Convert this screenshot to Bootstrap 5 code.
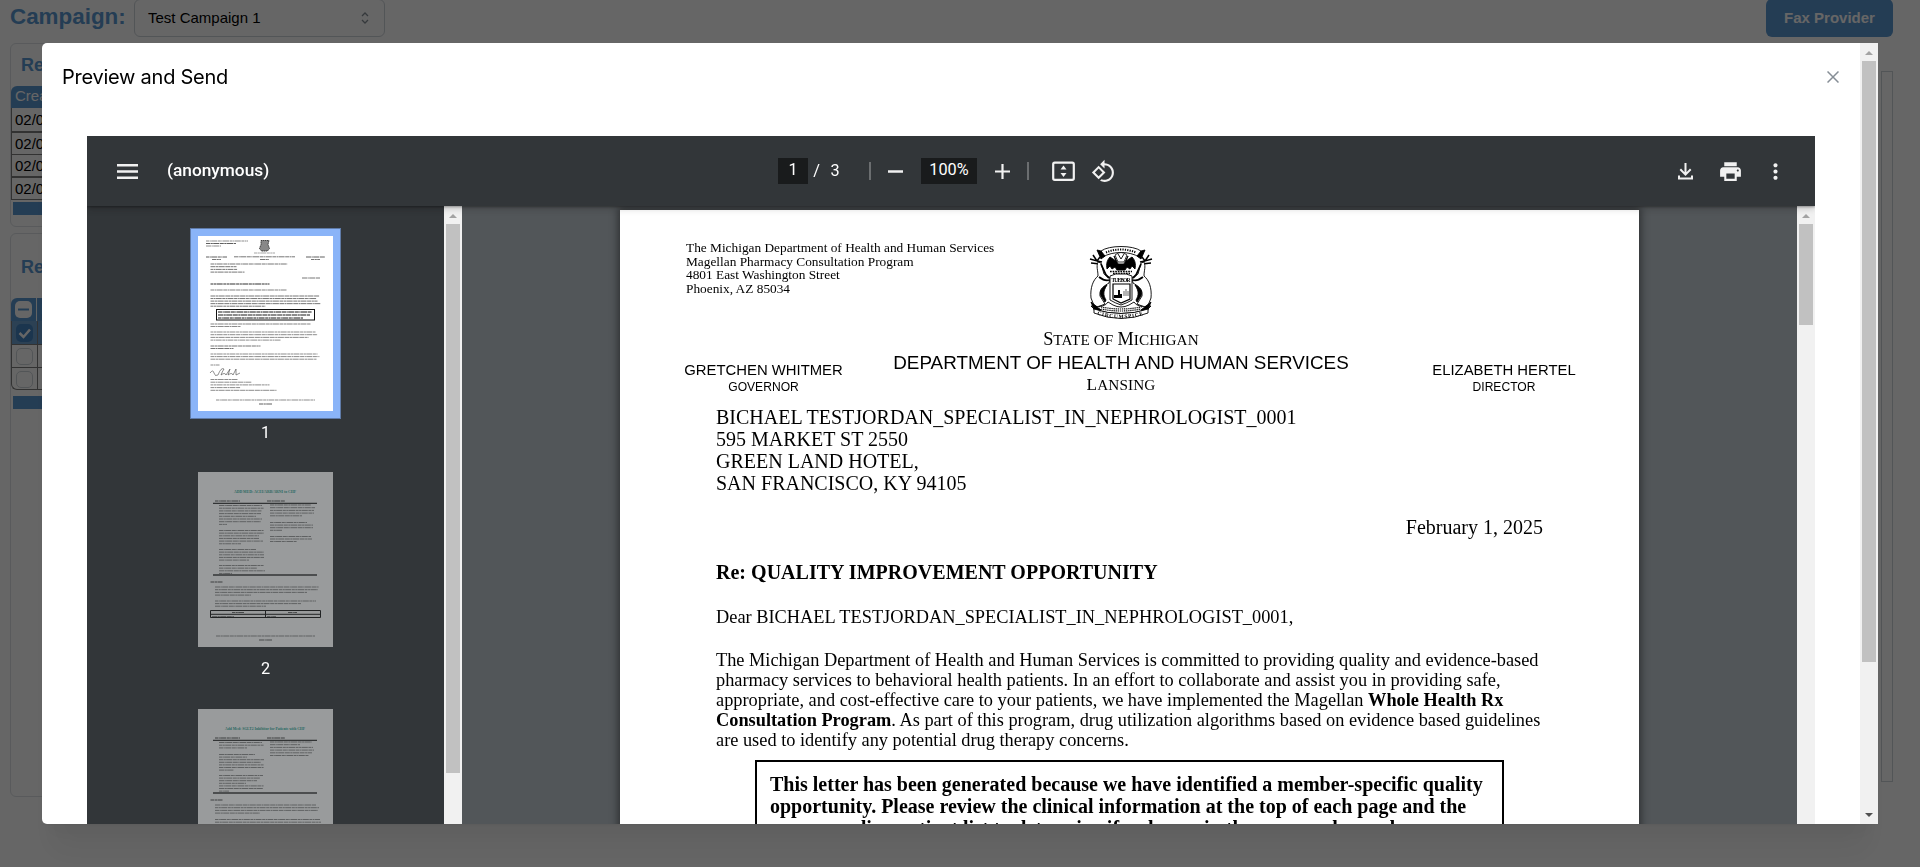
<!DOCTYPE html>
<html lang="en">
<head>
<meta charset="utf-8">
<title>Preview and Send</title>
<meta name="viewport" content="width=device-width, initial-scale=1">
<link href="https://cdn.jsdelivr.net/npm/bootstrap@5.3.0/dist/css/bootstrap.min.css" rel="stylesheet">
<style>
  body { height: 867px; overflow: hidden; background: #fff; font-family: "Liberation Sans", Arial, sans-serif; font-size: 15px; color: #000; }
  /* page under the overlay */
  .topbar { height: 37px; padding: 0 27px 0 10px; }
  .topbar-label { font-size: 22.4px; line-height: 34px; color: #5b98d2; width: 124px; }
  .campaign-select { width: 251px; height: 38px; margin-top: -1px; border: 1px solid #ced4da; border-radius: 6px; padding: 0 15px 0 13px; }
  .fax-btn { width: 127px; height: 38px; margin-top: -1px; border-radius: 6px; background: #5b98d2; color: #fff; font-size: 15px; padding: 0; border: 0; }
  .panel { border: 1px solid #dee2e6; border-radius: 6px; width: 900px; overflow: hidden; }
  .panel-title { font-size: 18px; line-height: 20px; padding-left: 10px; color: #5b98d2; }
  .grid-head { background: #5b98d2; color: #fff; border-radius: 6px 0 0 0; }
  .grid-row { border: solid #7d7d7d; border-width: 0 0 1px 1px; padding-left: 3px; }
  .grid-foot { height: 13px; margin-left: 2px; background: #5b98d2; }
  .tick { width: 17px; height: 17px; margin-left: 0; border: 1px solid #ced4da; border-radius: 5px; background: #fff; }
  .tick-cell { width: 26px; border-right: 1px solid #7d7d7d; padding: 3px 0 0 4px; }
  .side-panel { width: 12px; height: 711px; margin: 34px 27px 0 0; border: 1px solid #ced4da; }
  .veil { background: rgba(0,0,0,.6); }
  /* dialog */
  .dialog { left: 42px; top: 43px; width: 1836px; height: 781px; border-radius: 5px 0 0 5px; background: #fff; overflow: hidden; }
  .dialog-wrap { left: 42px; top: 43px; width: 1836px; height: 781px; box-shadow: 0 1px 3px rgba(0,0,0,.05), 0 36px 28px -7px rgba(0,0,0,.05), 0 17px 17px -7px rgba(0,0,0,.04); }
  .dialog-head { height: 93px; padding: 20px 20px 0 20px; }
  .dialog-title { font-family: Inter, sans-serif; font-size: 20px; line-height: 28px; letter-spacing: -.25px; }
  .sb { width: 18px; background: #f1f1f1; flex: none; }
  .sb-thumb { width: 14px; background: #c1c1c1; flex: none; }
  .viewer { margin: 0 45px; height: 688px; background: #525659; font-family: Roboto, sans-serif; }
  .pdf-bar { height: 70px; flex: none; background: #323639; color: #fff; z-index: 3; clip-path: inset(0 0 -10px 0); box-shadow: 0 1px 2px rgba(0,0,0,.3), 0 2px 6px rgba(0,0,0,.15), 0 4px 8px rgba(0,0,0,.06); }
  .pdf-bar svg { flex: none; fill: #f1f1f1; margin-top: 1px; }
  .pdf-name { font-size: 17.3px; font-weight: 500; width: 611px; margin-left: 27px; line-height: 20px; padding-bottom: 3px; }
  .field { background: #191b1c; height: 26px; line-height: 23px; font-size: 16.25px; text-align: center; }
  .vr-line { width: 2px; height: 18px; background: #6b6e70; }
  .rail { width: 357px; background: #323639; padding-left: 103px; }
  .thumb { width: 151px; border: 8px solid transparent; }
  .thumb-on { border-color: #8ab4f8; outline: 1px solid #5f7ba8; outline-offset: -1px; }
  .thumb-page { width: 135px; height: 175px; background: #fff; display: block; }
  .thumb-off { opacity: .5; }
  .thumb-no { color: #fff; font-size: 16.25px; line-height: 20px; width: 151px; text-align: center; }
  /* letter */
  .sheet { width: 1019px; height: 1320px; margin: 4px 0 0 158px; background: #fff; box-shadow: 0 0 8px 2px rgba(0,0,0,.45); color: #000; font-family: "Liberation Serif", "Times New Roman", serif; font-size: 20px; line-height: 22px; flex: none; white-space: nowrap; }
  .letterhead { display: grid; grid-template-columns: 159px 556px 177px; padding: 31px 0 0 64px; height: 196px; align-content: start; }
  .from { grid-column: 1 / 3; grid-row: 1; font-size: 13.33px; line-height: 13.33px; padding-left: 2px; }
  .seal { grid-column: 2; grid-row: 1; justify-self: center; margin-top: 3px; }
  .official { font-family: "Liberation Sans", Arial, sans-serif; font-size: 14.87px; line-height: 17px; text-align: center; padding-top: 42px; }
  .official div + div { font-size: 12.1px; }
  .caps { font-size: 18.3px; line-height: 20px; }
  .caps span { font-size: 15.2px; letter-spacing: .15px; }
  .dept { font-family: "Liberation Sans", Arial, sans-serif; font-size: 18.83px; line-height: 24px; padding-top: 1px; }
  .letter { padding: 0 96px; }
  .p-text { font-size: 18.33px; line-height: 20px; }
  .notice { border: 2px solid #000; width: 749px; margin: 10px 0 0 39px; padding: 11px 0 0 13px; }
</style>
</head>
<body>
<header class="topbar d-flex">
  <div class="topbar-label fw-bold">Campaign:</div>
  <div class="campaign-select d-flex align-items-center justify-content-between">
    <span>Test Campaign 1</span>
    <svg width="8" height="12" viewBox="0 0 8 12" fill="none" stroke="#868e96" stroke-width="1.3"><path d="M1 4 4 1l3 3M1 8l3 3 3-3"/></svg>
  </div>
  <button class="fax-btn fw-bold ms-auto">Fax Provider</button>
</header>
<main class="d-flex justify-content-between">
  <div style="padding:6px 0 0 10px">
    <section class="panel" style="height:184px">
      <div class="panel-title fw-bold" style="padding-top:11px;height:42px">Re</div>
      <div class="grid-head" style="height:22px;line-height:20px;padding-left:4px">Crea</div>
      <div class="grid-row" style="height:25px;line-height:24px;border-bottom-width:2px">02/0</div>
      <div class="grid-row" style="height:22px;line-height:22px">02/0</div>
      <div class="grid-row" style="height:23px;line-height:22px;border-bottom-width:2px">02/0</div>
      <div class="grid-row" style="height:22px;line-height:22px;margin-bottom:2px">02/0</div>
      <div class="grid-foot"></div>
    </section>
    <section class="panel" style="height:564px;margin-top:6px">
      <div class="panel-title fw-bold" style="padding-top:23px;height:64px">Re</div>
      <div class="grid-head d-flex" style="height:23px">
        <div class="tick-cell border-light"><svg class="d-block" width="17" height="17"><rect width="17" height="17" rx="5" fill="#fff"/><path d="M3 8.500h11" stroke="#5b98d2" stroke-width="2"/></svg></div>
        <span class="ps-1">P</span>
      </div>
      <div class="d-flex grid-row p-0" style="height:24px;background:#6fa3d3">
        <div class="tick-cell"><svg class="d-block" width="17" height="18"><rect width="17" height="18" rx="5" fill="#4585c2"/><path d="m3.500 9 4 4 6.500-7.500" fill="none" stroke="#fff" stroke-width="2.500"/></svg></div>
      </div>
      <div class="d-flex grid-row p-0" style="height:23px"><div class="tick-cell"><div class="tick"></div></div></div>
      <div class="d-flex grid-row p-0" style="height:22px;margin-bottom:6px;border-bottom-left-radius:6px"><div class="tick-cell"><div class="tick"></div></div></div>
      <div class="grid-foot"></div>
    </section>
  </div>
  <aside class="side-panel"></aside>
</main>

<div class="veil position-fixed top-0 start-0 w-100 h-100"></div>
<div class="dialog-wrap position-fixed"></div>
<div class="dialog position-fixed d-flex" role="dialog" aria-label="Preview and Send">
  <div class="flex-grow-1">
    <div class="dialog-head d-flex justify-content-between align-items-start">
      <div class="dialog-title">Preview and Send</div>
      <svg style="margin:8px 1px 0 0" width="12" height="12" viewBox="0 0 12 12" stroke="#868e96" stroke-width="1.5"><path d="M.5.5l11 11M11.500.5l-11 11"/></svg>
    </div>
    <div class="viewer d-flex flex-column">
      <div class="pdf-bar d-flex align-items-center position-relative">
        <svg style="margin-left:28px" width="25" height="25"><path d="M2 5h21v2.500H2zM2 11.200h21v2.500H2zM2 17.500h21V20H2z"/></svg>
        <div class="pdf-name">(anonymous)</div>
        <div class="field" style="width:30px">1</div>
        <div class="text-center" style="width:17px;font-size:16.25px">/</div>
        <div class="text-center" style="width:20px;font-size:16.25px">3</div>
        <div class="vr-line" style="margin-left:24px"></div>
        <svg style="margin-left:12px" width="25" height="25"><path d="M5 11.200h15v2.600H5z"/></svg>
        <div class="field" style="width:56px;margin-left:13px">100%</div>
        <svg style="margin-left:13px" width="25" height="25"><path d="M5 11.400h6.400V5h2.200v6.400H20v2.200h-6.400V20h-2.200v-6.400H5z"/></svg>
        <div class="vr-line" style="margin-left:12px"></div>
        <svg style="margin-left:22px" width="25" height="25"><rect x="2.200" y="3.700" width="20.600" height="17.100" rx="1.500" fill="none" stroke="#f1f1f1" stroke-width="2.200"/><path d="M12.500 6.500 15.500 10.500h-6zM12.500 18 15.500 14h-6z"/></svg>
        <svg style="margin-left:15px" width="25" height="25" viewBox="0 0 24 24"><path d="M7.340 6.410.86 12.900l6.490 6.480 6.490-6.480-6.500-6.490zM3.690 12.900l3.660-3.660L11 12.900l-3.660 3.660-3.650-3.660zm15.670-6.260C17.610 4.880 15.300 4 13 4V.76L8.760 5 13 9.240V6c1.790 0 3.580.68 4.950 2.050 2.730 2.730 2.730 7.170 0 9.900C16.580 19.320 14.790 20 13 20c-.97 0-1.940-.21-2.840-.61l-1.490 1.490C10.020 21.620 11.510 22 13 22c2.300 0 4.610-.88 6.360-2.640 3.520-3.510 3.520-9.210 0-12.720z"/></svg>
        <svg class="ms-auto" width="25" height="25"><path d="M12.500 4v11.500M7.300 10.300l5.200 5.300 5.200-5.300M6 16.500v3h13v-3" fill="none" stroke="#f1f1f1" stroke-width="2"/></svg>
        <svg style="margin-left:20px" width="25" height="25" viewBox="0 0 24 24"><path d="M19 8H5c-1.660 0-3 1.340-3 3v6h4v4h12v-4h4v-6c0-1.660-1.340-3-3-3zm-3 11H8v-5h8v5zm3-7c-.55 0-1-.45-1-1s.45-1 1-1 1 .45 1 1-.45 1-1 1zm-1-9H6v4h12V3z"/></svg>
        <svg style="margin:1px 27px 0 20px" width="25" height="25" viewBox="0 0 24 24"><path d="M12 8c1.100 0 2-.9 2-2s-.9-2-2-2-2 .9-2 2 .9 2 2 2zm0 2c-1.100 0-2 .9-2 2s.9 2 2 2 2-.9 2-2-.9-2-2-2zm0 6c-1.100 0-2 .9-2 2s.9 2 2 2 2-.9 2-2-.9-2-2-2z"/></svg>
      </div>
      <div class="d-flex flex-grow-1 overflow-hidden">
        <div class="rail overflow-hidden flex-shrink-0">
          <div class="thumb thumb-on" style="margin-top:22px"><svg class="thumb-page" data-page="1"></svg></div>
          <div class="thumb-no" style="margin-top:4px;margin-bottom:21px">1</div>
          <div class="thumb thumb-off"><svg class="thumb-page" data-page="2"></svg></div>
          <div class="thumb-no" style="margin-top:4px;margin-bottom:22px">2</div>
          <div class="thumb thumb-off"><svg class="thumb-page" data-page="3"></svg></div>
        </div>
        <div class="sb d-flex flex-column align-items-center">
          <svg width="18" height="18" class="flex-shrink-0"><path d="M9 8l4 4H5z" fill="#a3a3a3"/></svg>
          <div class="sb-thumb" style="height:549px"></div>
        </div>
        <div class="flex-grow-1 overflow-hidden d-flex align-items-start">
          <article class="sheet">
            <div class="letterhead">
              <div class="from"><div style="margin-bottom:.7px">The Michigan Department of Health and Human Services</div><div>Magellan Pharmacy Consultation Program</div><div>4801 East Washington Street</div><div>Phoenix, AZ 85034</div></div>
              <svg class="seal" width="64" height="76" viewBox="0 0 64 76" fill="none" stroke="#000" stroke-width=".9">
                <path d="M12 7C20 1 44 1 52 7l-2 6c-9-6-27-6-36 0z"/><path d="M12 7 8 6l4 9 4-3zM52 7l4-1-4 9-4-3z" fill="#000"/>
                <path d="M17 8.500c9-4 21-4 30 0" stroke-width="2" stroke-dasharray="1.200 1.200"/>
                <path d="M25 12l2 5-6-4c-3 3-4 7-3 12l3-3 2 3 3-2 2 3h8l2-3 3 2 2-3 3 3c1-5 0-9-3-12l-6 4 2-5-4 8h-6z" fill="#000"/>
                <path d="M26 11q6-5 12 0l-3 7h-6z" fill="#fff" stroke-width=".8"/><path d="m29 10 3 5 3-5" stroke-width=".9"/>
                <path d="M21 27.500h22M24 29.500h17" stroke-width="1.500" stroke-dasharray="1.700 .9"/>
                <path d="M1 15l7 2 3-4M4 11l4 6 5 1M2 19l9 1M63 15l-7 2-3-4M60 11l-4 6-5 1M62 19l-9 1" stroke-width="1.500"/>
                <path d="M9 18c-2 5 0 8 0 14-5 4-8 12-7 22l4 10 10-4-5-8c-1-7 4-10 9-13l1-5-6-4-3-11z" fill="#fff"/>
                <path d="M55 18c2 5 0 8 0 14 5 4 8 12 7 22l-4 10-10-4 5-8c1-7-4-10-9-13l-1-5 6-4 3-11z" fill="#fff"/>
                <path d="M12 20l5 11 3 3M10 33c4 3 7 4 10 3M52 20l-5 11-3 3M54 33c-4 3-7 4-10 3" stroke-width="1.800"/>
                <path d="M18 41c-5 2-8 6-6 11l4 6 1-2c-3-5-3-9 1-15zM46 41c5 2 8 6 6 11l-4 6-1-2c3-5 3-9-1-15z" fill="#000"/>
                <path d="M21 32q6-3 11-2 5-1 11 2v24q-5 3-11 5-6-2-11-5z" fill="#fff"/>
                <path d="M24 40h17v15l-9 4-8-4z" stroke-width="1.200"/>
                <path d="M25 51h4v-5h2v4h2v4h-8z" fill="#000" stroke="none"/><path d="M35 52v-5M37 52v-7M39 52v-5" stroke-width=".6"/>
                <text x="32" y="38" text-anchor="middle" textLength="19" font-family="Liberation Serif" font-weight="700" font-size="5.500" fill="#000" stroke="none">TUEBOR</text>
                <path d="M2 62q14 2 17-4l5 3q8 4 16 0l5-3q3 6 17 4l-4 4q-26 7-52 0z" fill="#fff"/>
                <path d="M10 62.500q22 5 44 0M12 65q20 4 40 0" stroke-width="1.200" stroke-dasharray="1.300 .8"/>
                <path d="M2 58l4 10 6-2zM62 58l-4 10-6-2z" fill="#000"/>
                <path d="M5 65q27 9 54 0v4q-27 11-54 0z" fill="#fff"/>
                <path id="motto" d="M8 70.500q24 7.500 48 0" stroke="none"/>
                <text font-family="Liberation Serif" font-weight="700" font-size="5.500" fill="#000" stroke="none"><textPath href="#motto" textLength="47">CIRCUMSPICE</textPath></text>
              </svg>
              <div class="official" style="grid-column:1">
                <div>GRETCHEN WHITMER</div><div>GOVERNOR</div>
              </div>
              <div class="text-center" style="grid-column:2;padding-top:9px">
                <div class="caps">S<span>TATE OF </span>M<span>ICHIGAN</span></div>
                <div class="dept">DEPARTMENT OF HEALTH AND HUMAN SERVICES</div>
                <div class="caps" style="font-size:17.300px">L<span>ANSING</span></div>
              </div>
              <div class="official" style="grid-column:3;padding-left:33px">
                <div>ELIZABETH HERTEL</div><div>DIRECTOR</div>
              </div>
            </div>
            <div class="letter">
              <div>BICHAEL TESTJORDAN_SPECIALIST_IN_NEPHROLOGIST_0001</div>
              <div>595 MARKET ST 2550</div>
              <div>GREEN LAND HOTEL,</div>
              <div>SAN FRANCISCO, KY 94105</div>
              <div class="text-end" style="margin:22px 0">February 1, 2025</div>
              <div class="fw-bold" style="position:static;padding-top:1px;letter-spacing:.02px">Re: QUALITY IMPROVEMENT OPPORTUNITY</div>
              <div style="margin:23px 0 22px;font-size:18.350px">Dear BICHAEL TESTJORDAN_SPECIALIST_IN_NEPHROLOGIST_0001,</div>
              <div class="p-text">The Michigan Department of Health and Human Services is committed to providing quality and evidence-based<br>pharmacy services to behavioral health patients. In an effort to collaborate and assist you in providing safe,<br>appropriate, and cost-effective care to your patients, we have implemented the Magellan <b>Whole Health Rx</b><br><b>Consultation Program</b>. As part of this program, drug utilization algorithms based on evidence based guidelines<br>are used to identify any potential drug therapy concerns.</div>
              <div class="notice fw-bold">This letter has been generated because we have identified a member-specific quality<br>opportunity. Please review the clinical information at the top of each page and the<br>corresponding patient list to determine if a change in therapy can be made.</div>
            </div>
          </article>
        </div>
        <div class="sb d-flex flex-column align-items-center">
          <svg width="18" height="18" class="flex-shrink-0"><path d="M9 8l4 4H5z" fill="#a3a3a3"/></svg>
          <div class="sb-thumb" style="height:101px"></div>
        </div>
      </div>
    </div>
  </div>
  <div class="sb d-flex flex-column align-items-center">
    <svg width="18" height="18" class="flex-shrink-0"><path d="M9 8l4 4H5z" fill="#a3a3a3"/></svg>
    <div class="sb-thumb" style="height:601px"></div>
    <svg width="18" height="18" class="mt-auto flex-shrink-0"><path d="M9 11l4-4H5z" fill="#505050"/></svg>
  </div>
</div>
<script src="https://cdn.jsdelivr.net/npm/bootstrap@5.3.0/dist/js/bootstrap.bundle.min.js"></script>
<script>
  // Miniature pages: each text line is [x, y, width, strength]
  const col = (x, y, step, widths, s = .5) => widths.map((w, i) => [x, y + i * step, w, s]);
  const foot = [[18, 164, 99, .5], [61, 168, 13, .7]];
  const heads = [[17, 29, 25, .8], [69, 29, 18, .8]];
  const pages = {
    1: { lines: [[8,5,42,.5],[8,7.500,30,.7],[8,10,15,.5],[56,17,21,.4],[36,20.800,61,.6],[62,23.500,9,.6],[8,21,21,.7],[14,23.500,9,.6],[108,21,19,.7],[113,23.500,9,.6],
      ...col(12.500,28,2.700,[77,26,27,34],.6),[104,42,18,.6],[12.500,48,59,.9],[12.500,54,76,.55],
      ...col(12.500,60,2.550,[109,106,107,110,55],.6),...col(20,76,3,[94,92,85],1),
      [12.500,88,100,.55],[12.500,90.500,30,.5],...col(12.500,96,2.700,[105,107,98,70]),
      [12.500,110,50,.6],[12.500,112.500,23,.6],...col(12.500,118,2.600,[107,109,106]),[12.500,129,9,.5],
      ...col(12.500,143.500,2.700,[27,41,59,30,66]),...foot],
      extra: '<rect x="18.500" y="73.500" width="98" height="10.500" fill="none" stroke="#111"/><path d="M12 137q3-4 4 0t4 2q3-8 6-6-2 3-3 6 4-3 5 0l4-6-2 6q4-3 5 0l3-6 0 6 4-2" fill="none" stroke="#444" stroke-width=".6"/><path d="M63 4.500h8l-1 4 1.500 4-2 2.500h-6l-2-2.500 1.500-4z" fill="#888" stroke="#222" stroke-width=".8" stroke-dasharray="1.500 .5"/>' },
    2: { title: ['ADD MED: ACEI/ARB/ARNI to CHF', 36, 62],
      lines: [...heads,...col(21,33.500,2.700,[43,45,43,42,37,43,42,8]),...col(21,58.500,2.650,[45,45,40,40,44,22]),...col(21,77.500,2.650,[37,45,45,45,30]),...col(21,93.500,2.650,[45,38,46,13]),
      ...col(72,33,2.700,[41,45,44,44,32]),...col(72,50.500,2.600,[37,43,43,12]),...col(72,64.500,2.500,[41,42,27]),
      [12.500,110,12,.8],...col(17,115,2.700,[104,103,92,36]),...col(17,129,2.600,[101,86,51]),[34,140.500,12,.7],[90,140.500,9,.7],[14,144.500,22,.5],[69,144.500,9,.5],...foot],
      extra: '<path d="M15 31.300h104" stroke="#000" stroke-width="1"/><path d="M15 103h104" stroke="#333" stroke-width="1.600"/><path d="M12.500 138.500h110v7h-110zM67.500 138.500v7M12.500 142.300h110" fill="none" stroke="#111" stroke-width="1"/>' },
    3: { title: ['Add Med: SGLT2 Inhibitor for Patients with CHF', 27, 80],
      lines: [...heads,...col(21,33.500,2.700,[43,45,28]),...col(21,45.500,2.600,[36,28,45,42,45,45,15]),...col(21,66.500,2.600,[44,41,38,27,45,44,10]),
      ...col(72,33,2.700,[42,30,43,44,42,39]),[12.500,91,12,.8],...col(17,96,2.700,[101,104,103,45]),...col(17,110.500,2.700,[105,106,100])],
      extra: '<path d="M15 31.300h104" stroke="#000" stroke-width="1"/><path d="M15 84h104" stroke="#333" stroke-width="1.600"/>' }
  };
  document.querySelectorAll('.thumb-page').forEach(svg => {
    const p = pages[svg.dataset.page];
    let out = p.extra;
    p.lines.forEach(([x, y, w, s], i) => {
      out += `<path d="M${x} ${y}h${w}" stroke="#000" stroke-opacity="${s}" stroke-width=".9" stroke-dasharray="${3 + i % 3} .5 ${1.3 + i % 2} .4 6 .6"/>`;
    });
    if (p.title) out += `<text x="${p.title[1]}" y="21" textLength="${p.title[2]}" lengthAdjust="spacingAndGlyphs" font-family="Liberation Serif" font-weight="700" font-size="4" fill="#1a9c8c">${p.title[0]}</text>`;
    svg.innerHTML = out;
  });
</script>
</body>
</html>
